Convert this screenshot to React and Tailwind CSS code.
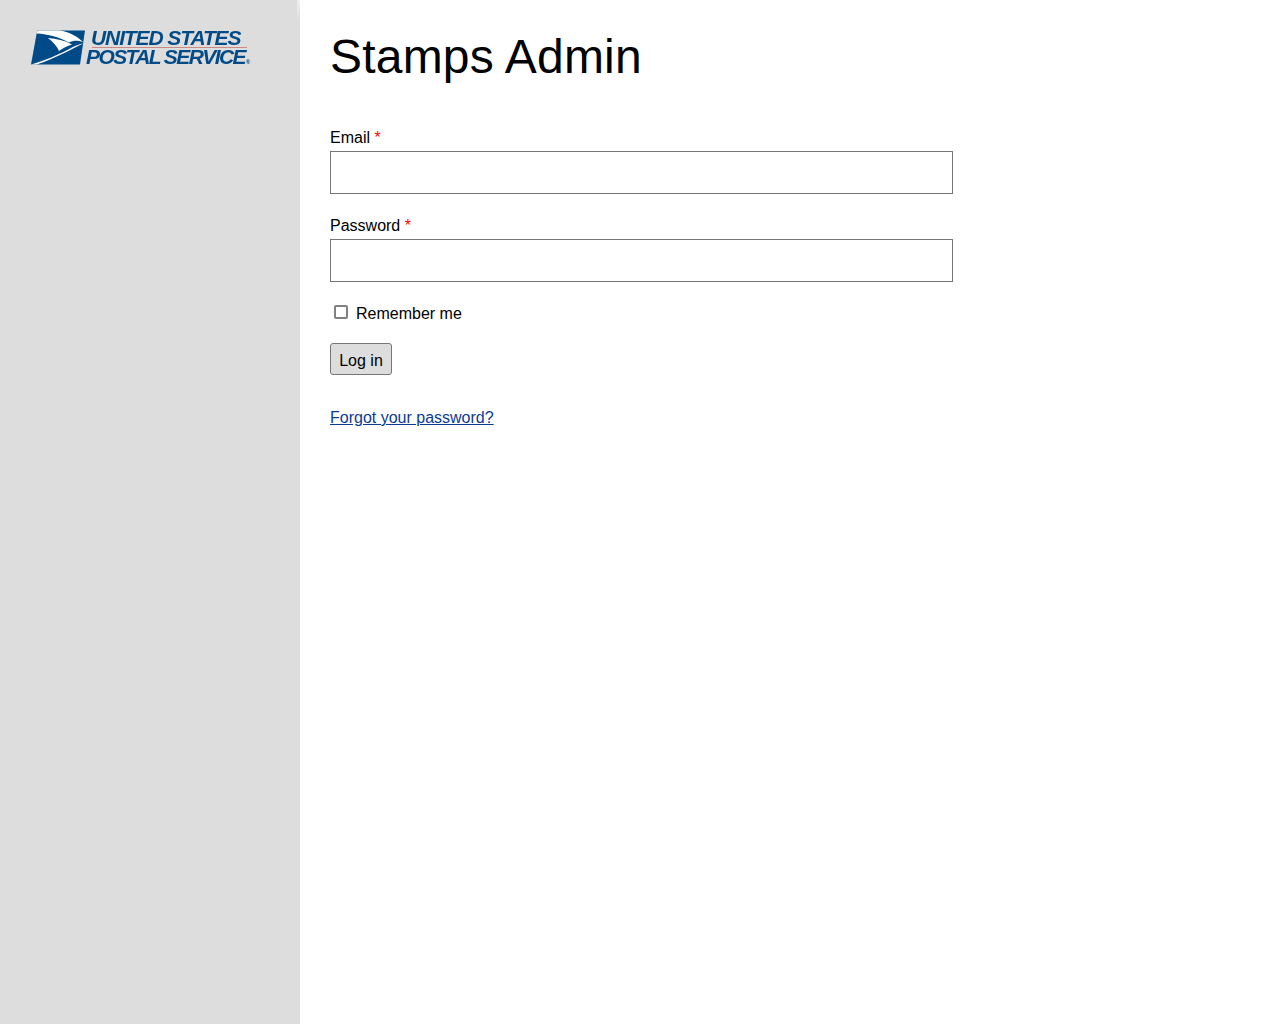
export default function App() {
  return (
    <div className="flex min-h-[1024px] bg-white text-black font-['Liberation_Sans',Arial,sans-serif] text-base">
      <aside className="relative w-[300px] shrink-0 bg-[#dddddd] pt-[28px] pl-[30px]">
        <div className="absolute top-0 right-0 w-[3px] h-[22px] bg-gradient-to-b from-[#eeeeee] to-[#dddddd]" />
        <div className="flex items-start blur-[0.35px]">
          <svg width="56" height="38" viewBox="0 0 56 38" className="shrink-0">
            <path d="M7.2 2.5 H55 L50 36.5 H1 Z" fill="#004b87" />
            <path d="M7.5 2.5 H30 C40 4 48 9 53 14 C47 12 43 12.5 39 14.5 C30 9.5 18 6 6.7 5.5 Z" fill="#fff" />
            <path d="M18 10 C26 10.5 35 12.5 42 16.5 C37 18 33 20 29 23 C27 18 23 14 18 10 Z" fill="#fff" />
            <path d="M1 36.5 C14 33 30 26 42 19.5 C46 17.5 50 16 53 15.5 C44 20 22 32 6.5 36.5 Z" fill="#fff" />
          </svg>
          <div className="pt-[1px] font-['Liberation_Sans',Arial,sans-serif] italic font-bold text-[#004b87] text-[21px] leading-[18px] whitespace-nowrap">
            <div className="pl-[5px] tracking-[-1.1px]">UNITED STATES</div>
            <div className="ml-[6px] w-[155px] border-t border-[#c98a85]" />
            <div className="flex items-end tracking-[-1.6px]">POSTAL SERVICE<span className="ml-[1px] text-[6px] leading-[8px] tracking-normal">®</span></div>
          </div>
        </div>
      </aside>
      <main className="flex-1 pl-[30px]">
        <h1 className="mt-[28px] text-[48px] leading-[58px] font-normal tracking-[0.2px]">Stamps Admin</h1>
        <form className="mt-[35px] w-[623px]">
          <label className="block h-[30px] pt-[5px] leading-[24px]" htmlFor="email">
            Email <span className="text-[#ff0000]">*</span>
          </label>
          <input id="email" className="block w-full h-[43px] border border-[#767676] bg-white" />
          <label className="block mt-[14px] h-[31px] pt-[6px] leading-[24px]" htmlFor="password">
            Password <span className="text-[#ff0000]">*</span>
          </label>
          <input id="password" type="password" className="block w-full h-[43px] border border-[#767676] bg-white" />
          <div className="mt-[23px] flex items-center h-[16px] pl-[4px]">
            <span className="block size-[14px] rounded-[2px] border-2 border-[#808080] bg-white -mt-[2px]" />
            <span className="ml-[8px] leading-[18px] pt-[2px]">Remember me</span>
          </div>
          <button type="button" className="block mt-[22px] w-[62px] h-[32px] rounded-[3px] border border-[#767676] bg-[#dddddd] text-base leading-[18px] pt-[3px]">
            Log in
          </button>
          <a href="#" className="inline-block mt-[34px] leading-[18px] text-[#0b3a94] underline">Forgot your password?</a>
        </form>
      </main>
    </div>
  );
}
